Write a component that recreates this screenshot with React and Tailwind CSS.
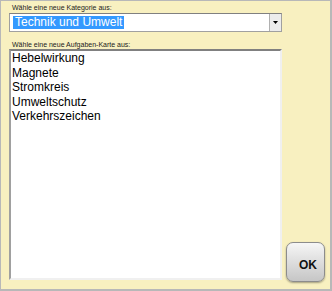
import React from "react";

export default function App() {
  const items = ["Hebelwirkung", "Magnete", "Stromkreis", "Umweltschutz", "Verkehrszeichen"];
  return (
    <div className="w-[332px] h-[291px] bg-[#f8f0c0] border border-[#b8b8b8] border-r-2 border-b-2 box-border pl-[8px] pt-[2px] flex flex-col" style={{ fontFamily: '"Liberation Sans", Arial, sans-serif' }}>
      <div className="text-[7px] leading-[9px] text-[#222] pl-[3px] whitespace-nowrap">Wähle eine neue Kategorie aus:</div>
      <div className="mt-[1px] w-[273px] h-[19px] bg-white border border-[#a0a0a0] border-t-[#808080] flex items-center box-border">
        <div className="flex-1 pl-[3px] flex items-center">
          <span className="bg-[#3399ff] text-white text-[12px] leading-[13px] pl-[2px] pr-[2px] whitespace-nowrap">Technik und Umwelt</span>
        </div>
        <div className="w-[12px] h-full bg-[#ececec] border-l border-[#b0b0b0] flex items-center justify-center">
          <svg width="5" height="3" viewBox="0 0 5 3"><path d="M0 0H5L2.5 3Z" fill="#000" /></svg>
        </div>
      </div>
      <div className="mt-[8px] text-[7px] leading-[9px] text-[#222] pl-[3px] whitespace-nowrap">Wähle eine neue Aufgaben-Karte aus:</div>
      <div className="flex flex-row items-end">
        <div className="w-[273px] h-[231px] bg-white border-2 border-t-[#808080] border-l-[#a0a0a0] border-r-[#f0f0f0] border-b-[#f0f0f0] box-border pl-[1px] text-[12px] leading-[14.5px] text-black">
          {items.map((t) => (
            <div key={t} className="whitespace-nowrap">{t}</div>
          ))}
        </div>
        <div className="ml-[4px] mb-[-2px] w-[39px] h-[40px] rounded-[7px] border border-[#8c8c8c] bg-gradient-to-b from-[#f6f6f6] to-[#c6c6c6] shadow-[0_1px_2px_rgba(0,0,0,0.35)] flex items-center justify-center">
          <span className="text-[12px] font-bold text-[#111] pl-[5px] pt-[5px]">OK</span>
        </div>
      </div>
    </div>
  );
}
